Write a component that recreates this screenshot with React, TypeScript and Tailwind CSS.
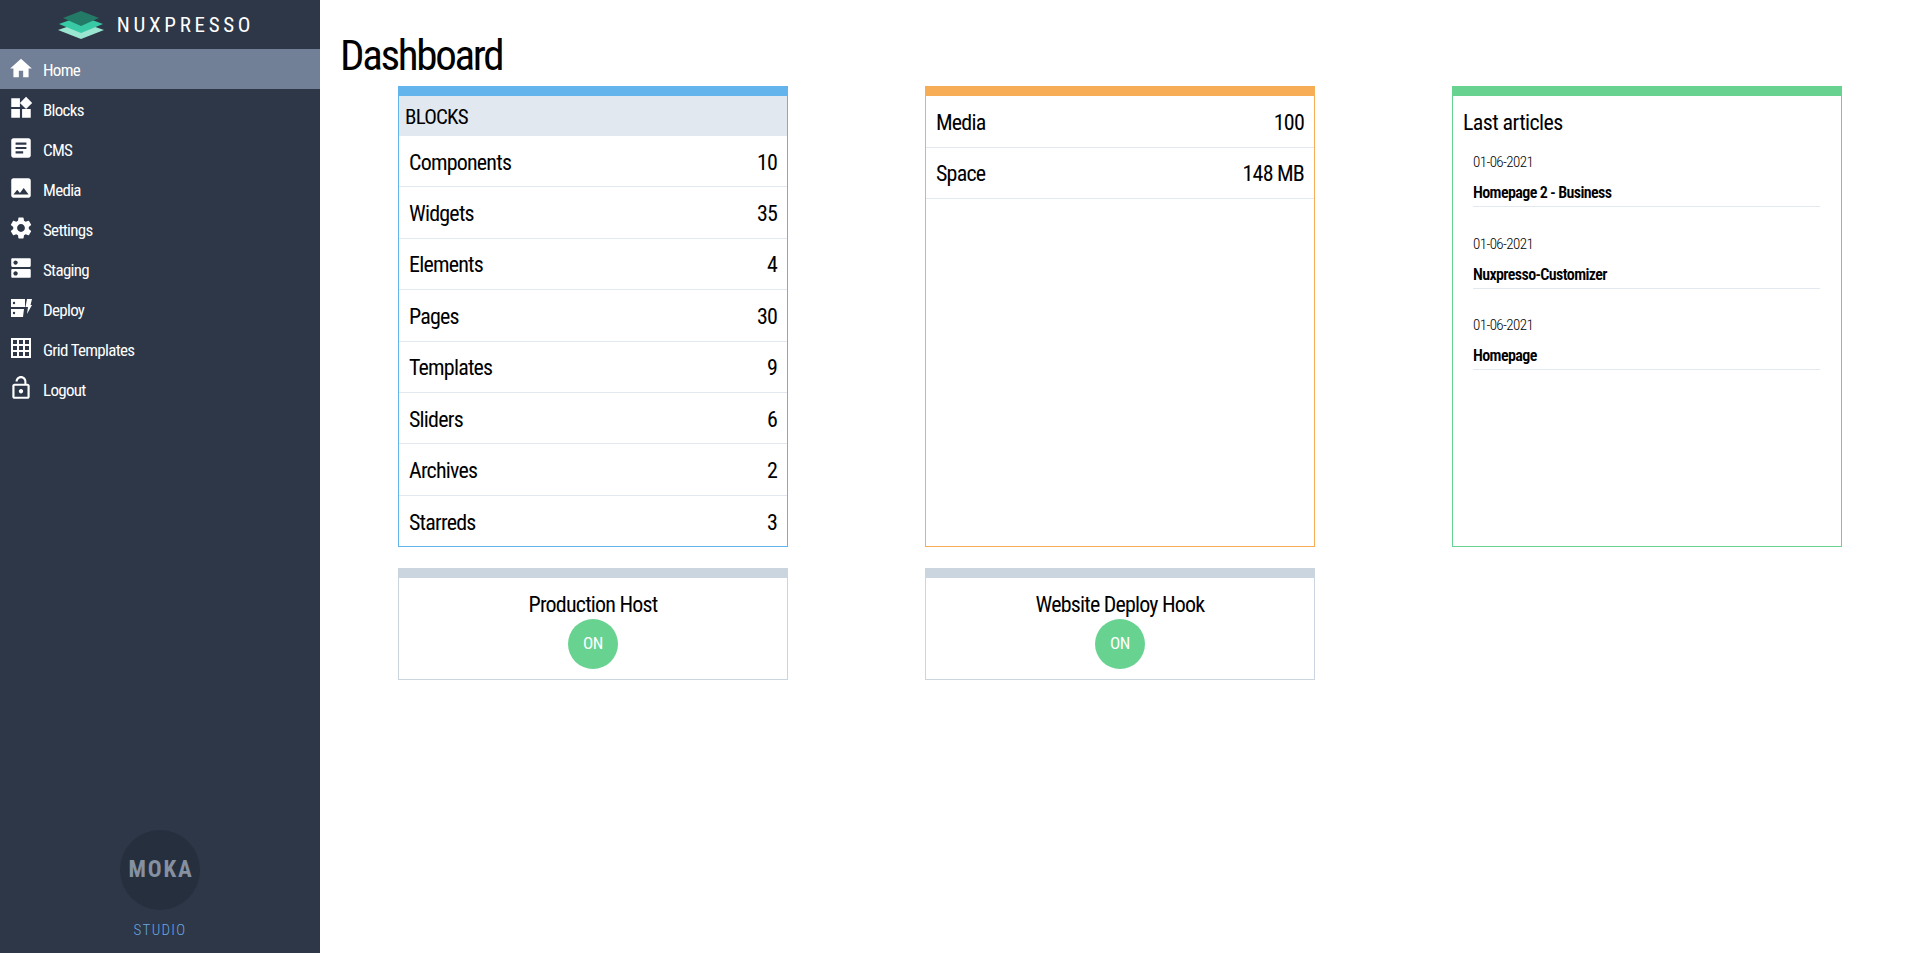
import React from "react";
import { MdHome, MdWidgets, MdArticle, MdImage, MdSettings, MdDns, MdLockOpen } from "react-icons/md";

const font = "[font-family:'Roboto_Condensed','Liberation_Sans_Narrow','Liberation_Sans',sans-serif]";

function DeployIcon() {
  return (
    <svg viewBox="0 0 24 24" width="24" height="24" fill="currentColor">
      <path d="M2 3h14v8H2zM2 13h13l-1 8H2z" />
      <circle cx="5" cy="7" r="1.2" fill="#2d3748" />
      <circle cx="5" cy="17" r="1.2" fill="#2d3748" />
      <path d="M18 3h5l-1.5 6H23l-5 9 1-7h-2.5z" />
    </svg>
  );
}

function GridIcon() {
  return (
    <svg viewBox="0 0 20 20" width="20" height="20">
      <path
        fill="currentColor"
        fillRule="evenodd"
        d="M0 0h20v20H0zM2 2v4h4V2zM8 2v4h4V2zM14 2v4h4V2zM2 8v4h4V8zM8 8v4h4V8zM14 8v4h4V8zM2 14v4h4v-4zM8 14v4h4v-4zM14 14v4h4v-4z"
      />
    </svg>
  );
}

const nav: [string, React.ReactNode][] = [
  ["Home", <MdHome size={27} />],
  ["Blocks", <MdWidgets size={26} />],
  ["CMS", <MdArticle size={26} />],
  ["Media", <MdImage size={26} />],
  ["Settings", <MdSettings size={26} />],
  ["Staging", <MdDns size={26} />],
  ["Deploy", <DeployIcon />],
  ["Grid Templates", <GridIcon />],
  ["Logout", <MdLockOpen size={26} />],
];

const blocks: [string, string][] = [
  ["Components", "10"],
  ["Widgets", "35"],
  ["Elements", "4"],
  ["Pages", "30"],
  ["Templates", "9"],
  ["Sliders", "6"],
  ["Archives", "2"],
  ["Starreds", "3"],
];

const articles = ["Homepage 2 - Business", "Nuxpresso-Customizer", "Homepage"];

function Logo() {
  return (
    <svg viewBox="0 0 46 30" width="46" height="30">
      <path d="M0 20 23 12l23 8-23 9z" fill="#9ae6d0" />
      <path d="M1 14 23 6l22 8-22 9z" fill="#38c9a5" />
      <path d="M5 8 23 1l18 7-18 8z" fill="#237a66" />
    </svg>
  );
}

function Status({ title }: { title: string }) {
  return (
    <div className="w-[390px] h-[112px] border border-[#cbd5e0] border-t-[10px] flex flex-col items-center pt-[12px]">
      <div className="text-[22px] leading-[29px] tracking-[-0.8px] text-black">{title}</div>
      <div className="w-[50px] h-[50px] rounded-full bg-[#68d391] text-white text-[17px] tracking-[-0.5px] flex items-center justify-center">ON</div>
    </div>
  );
}

export default function App() {
  return (
    <div className={`flex h-[953px] overflow-hidden bg-white ${font}`}>
      <aside className="w-[320px] shrink-0 bg-[#2d3748] flex flex-col text-white">
        <div className="h-[49px] flex items-center justify-center gap-[13px] pr-[8px]">
          <Logo />
          <span className="pt-[2px] text-[21px] tracking-[3.7px]">NUXPRESSO</span>
        </div>
        <nav>
          {nav.map(([label, icon], i) => (
            <div key={label} className={`h-[40px] flex items-center pl-[8px] ${i === 0 ? "bg-[#718096]" : ""}`}>
              <span className="w-[26px] flex justify-center -translate-y-px">{icon}</span>
              <span className="ml-[9px] pt-[4px] text-[17px] tracking-[-0.7px]">{label}</span>
            </div>
          ))}
        </nav>
        <div className="mt-auto flex flex-col items-center pb-[13px]">
          <div className="w-[80px] h-[80px] rounded-full bg-[#252f3d] flex items-center justify-center pl-[2px] text-[#8590a1] text-[23px] font-bold tracking-[1.8px]">MOKA</div>
          <div className="mt-[10px] text-[15px] leading-[20px] font-light tracking-[1.3px] text-[#6ba7e0]">STUDIO</div>
        </div>
      </aside>
      <main className="flex-1 min-w-0">
        <h1 className="h-[86px] pl-[20px] pt-[27px] text-[43px] leading-[56px] tracking-[-2.3px] text-black">Dashboard</h1>
        <div className="grid grid-cols-[527px_527px_390px] ml-[78px] gap-y-[21px]">
          <div className="w-[390px] h-[461px] border border-[#63b3ed] border-t-[10px]">
            <div className="h-[40px] bg-[#e2e8f0] pl-[6px] pt-[1px] text-[21px] leading-[40px] tracking-[-0.8px] text-black">BLOCKS</div>
            {blocks.map(([a, b], i) => (
              <div key={a} className={`h-[51.4px] flex items-center justify-between px-[10px] pt-[2px] text-[22px] tracking-[-0.8px] text-black ${i < 7 ? "border-b border-[#e2e8f0]" : ""}`}>
                <span>{a}</span>
                <span>{b}</span>
              </div>
            ))}
          </div>
          <div className="w-[390px] h-[461px] border border-[#f6ad55] border-t-[10px]">
            {[["Media", "100"], ["Space", "148 MB"]].map(([a, b]) => (
              <div key={a} className="h-[51.5px] flex items-center justify-between px-[10px] pt-[2px] text-[22px] tracking-[-0.8px] text-black border-b border-[#e2e8f0]">
                <span>{a}</span>
                <span>{b}</span>
              </div>
            ))}
          </div>
          <div className="w-[390px] h-[461px] border border-[#68d391] border-t-[10px] pl-[10px] pr-[21px]">
            <div className="pt-[13px] text-[22px] leading-[28px] tracking-[-0.6px] text-black">Last articles</div>
            <div className="pl-[10px] pt-[15px]">
              {articles.map((t) => (
                <div key={t} className="h-[81.7px]">
                  <div className="text-[15px] leading-[20px] font-light tracking-[-0.6px] text-black">01-06-2021</div>
                  <div className="mt-[10px] text-[16px] leading-[22px] font-semibold tracking-[-0.6px] text-black pb-[2px] border-b border-[#e2e8f0]">{t}</div>
                </div>
              ))}
            </div>
          </div>
          <Status title="Production Host" />
          <Status title="Website Deploy Hook" />
        </div>
      </main>
    </div>
  );
}
